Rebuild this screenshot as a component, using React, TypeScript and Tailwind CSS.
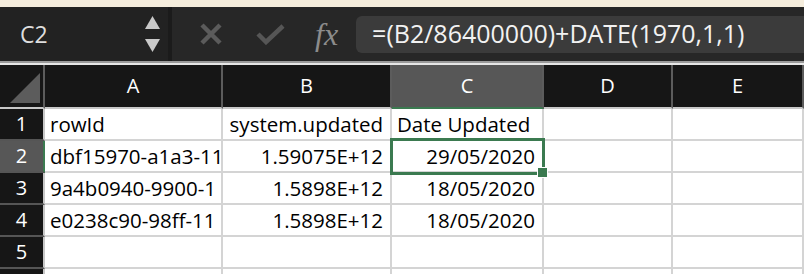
import React from "react";

const cellFont = { fontFamily: "'Open Sans', 'Noto Sans', sans-serif" };

type Row = { n: number; a: string; b: string; c: string };

const rows: Row[] = [
  { n: 1, a: "rowId", b: "system.updated", c: "Date Updated" },
  { n: 2, a: "dbf15970-a1a3-11", b: "1.59075E+12", c: "29/05/2020" },
  { n: 3, a: "9a4b0940-9900-1", b: "1.5898E+12", c: "18/05/2020" },
  { n: 4, a: "e0238c90-98ff-11", b: "1.5898E+12", c: "18/05/2020" },
  { n: 5, a: "", b: "", c: "" },
  { n: 6, a: "", b: "", c: "" },
];

function Toolbar() {
  return (
    <div className="flex flex-col">
      <div className="h-[7px] bg-[#f5eddd]" />
      <div className="flex h-[54px] bg-[#272727]">
        <div className="flex w-[168px] items-center justify-between bg-[#222222] pl-5 pr-[8px]">
          <span className="text-[23px] text-[#dedede]" style={cellFont}>
            C2
          </span>
          <div className="flex flex-col items-center gap-[10px]">
            <svg width="15" height="13" viewBox="0 0 15 13">
              <polygon points="7.5,0 15,13 0,13" fill="#c9c9c9" />
            </svg>
            <svg width="15" height="13" viewBox="0 0 15 13">
              <polygon points="0,0 15,0 7.5,13" fill="#c9c9c9" />
            </svg>
          </div>
        </div>
        <div className="w-[4px] bg-[#1b1b1b]" />
        <div className="flex flex-1 items-center">
          <svg className="ml-[28px]" width="22" height="22" viewBox="0 0 22 22">
            <path d="M2 2 L20 20 M20 2 L2 20" stroke="#5b5b5b" strokeWidth="4.5" />
          </svg>
          <svg className="ml-[34px]" width="29" height="21" viewBox="0 0 29 21">
            <path d="M2 10 L10 18 L27 2" stroke="#565656" strokeWidth="4.5" fill="none" />
          </svg>
          <span
            className="ml-[30px] text-[32px] italic leading-none text-[#8c8c8c]"
            style={{ fontFamily: "'Liberation Serif', serif" }}
          >
            fx
          </span>
          <div className="ml-[18px] flex h-[37px] flex-1 items-center rounded-l-md bg-[#3b3b3b] pl-[16px]">
            <span className="text-[25px] text-[#f2f2f2]" style={cellFont}>
              =(B2/86400000)+DATE(1970,1,1)
            </span>
          </div>
        </div>
      </div>
      <div className="h-[4px] border-t-2 border-[#9a9a9a] bg-[#e6e6e6]" />
    </div>
  );
}

function Header() {
  const cols = [
    { l: "A", w: "w-[178px]" },
    { l: "B", w: "w-[169px]" },
    { l: "C", w: "w-[152px]" },
    { l: "D", w: "w-[129px]" },
    { l: "E", w: "flex-1" },
  ];
  return (
    <div className="flex h-[44px]">
      <div className="relative w-[45px] border-b-2 border-r-2 border-b-[#c8c8c8] border-r-[#5c5c5c] bg-[#161616]">
        <svg className="absolute left-[10px] top-[8px]" width="30" height="30" viewBox="0 0 30 30">
          <polygon points="30,0 30,30 0,30" fill="#5c5c5c" />
        </svg>
      </div>
      {cols.map((c) => {
        const sel = c.l === "C";
        return (
          <div
            key={c.l}
            className={`${c.w} flex items-center justify-center border-b-2 border-r-2 border-r-[#5c5c5c] text-[20px] font-medium text-white ${
              sel ? "border-b-[#3b7a50] bg-[#575757]" : "border-b-[#c8c8c8] bg-[#161616]"
            }`}
            style={cellFont}
          >
            {c.l}
          </div>
        );
      })}
    </div>
  );
}

function Cell({ w, text, right }: { w: string; text: string; right?: boolean }) {
  return (
    <div
      className={`${w} flex items-center overflow-hidden whitespace-nowrap border-b-2 border-r-2 border-[#d4d4d4] bg-white text-[20.5px] text-black ${
        right ? "justify-end pr-[7px]" : "pl-[5px]"
      }`}
      style={cellFont}
    >
      {text}
    </div>
  );
}

export default function App() {
  return (
    <div className="h-[274px] w-[804px] overflow-hidden bg-white">
      <Toolbar />
      <div className="relative">
        <Header />
        {rows.map((r) => {
          const sel = r.n === 2;
          return (
            <div key={r.n} className="flex h-[32px]">
              <div
                className={`flex w-[45px] items-center justify-center border-b-2 border-r-2 border-b-[#555555] text-[20px] font-medium text-white ${
                  sel ? "border-r-[#3b7a50] bg-[#575757]" : "border-r-[#c8c8c8] bg-[#161616]"
                }`}
                style={cellFont}
              >
                {r.n < 6 ? r.n : ""}
              </div>
              <Cell w="w-[178px]" text={r.a} />
              <Cell w="w-[169px]" text={r.b} right />
              <Cell w="w-[152px]" text={r.c} right={r.n !== 1} />
              <Cell w="w-[129px]" text="" />
              <Cell w="flex-1" text="" />
            </div>
          );
        })}
        <div className="pointer-events-none absolute left-[390px] top-[73px] h-[37px] w-[155px] border-[3px] border-[#3b7a50]" />
        <div className="absolute left-[537px] top-[102px] h-[11px] w-[11px] border border-white bg-[#3b7a50]" />
      </div>
    </div>
  );
}
